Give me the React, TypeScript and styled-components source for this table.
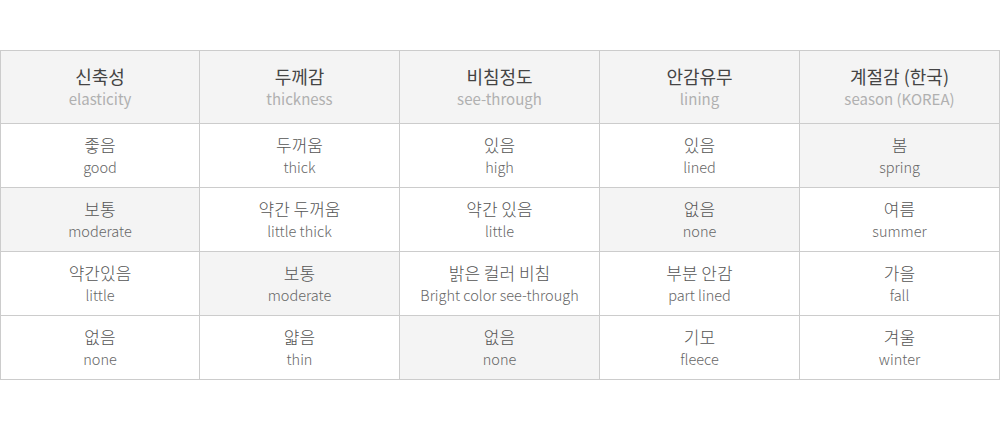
import React from "react";
import styled, { createGlobalStyle } from "styled-components";

const Global = createGlobalStyle`
  html, body { margin: 0; padding: 0; background: #fff; }
  body { font-family: "Noto Sans CJK KR", "Noto Sans", sans-serif; }
`;

const Page = styled.div`
  width: 1000px;
  padding-top: 50px;
`;

const Table = styled.table`
  width: 1000px;
  border-collapse: collapse;
  table-layout: fixed;
`;

const Col = styled.col<{ $w: number }>`
  width: ${(p) => p.$w}px;
`;

const HeadCell = styled.th`
  height: 72px;
  padding: 0;
  border: 1px solid #cccccc;
  background: #f4f4f4;
  text-align: center;
  vertical-align: middle;
  font-weight: normal;
`;

const Cell = styled.td<{ $on?: boolean }>`
  height: 63px;
  padding: 0;
  border: 1px solid #cccccc;
  background: ${(p) => (p.$on ? "#f4f4f4" : "#ffffff")};
  text-align: center;
  vertical-align: middle;
`;

const HeadKo = styled.div`
  font-size: 18px;
  line-height: 24px;
  color: #444444;
`;

const HeadEn = styled.div`
  font-size: 15px;
  line-height: 22px;
  color: #b0b0b0;
`;

const Ko = styled.div`
  font-size: 17px;
  line-height: 23px;
  color: #555555;
  font-weight: 300;
`;

const En = styled.div`
  font-size: 14.5px;
  line-height: 22px;
  color: #666666;
  font-weight: 300;
`;

const heads: [string, string][] = [
  ["신축성", "elasticity"],
  ["두께감", "thickness"],
  ["비침정도", "see-through"],
  ["안감유무", "lining"],
  ["계절감 (한국)", "season (KOREA)"],
];

type C = [string, string, boolean?];
const rows: C[][] = [
  [["좋음", "good"], ["두꺼움", "thick"], ["있음", "high"], ["있음", "lined"], ["봄", "spring", true]],
  [["보통", "moderate", true], ["약간 두꺼움", "little thick"], ["약간 있음", "little"], ["없음", "none", true], ["여름", "summer"]],
  [["약간있음", "little"], ["보통", "moderate", true], ["밝은 컬러 비침", "Bright color see-through"], ["부분 안감", "part lined"], ["가을", "fall"]],
  [["없음", "none"], ["얇음", "thin"], ["없음", "none", true], ["기모", "fleece"], ["겨울", "winter"]],
];

const widths = [199, 200, 200, 200, 200];

export default function App() {
  return (
    <Page>
      <Global />
      <Table>
        <colgroup>
          {widths.map((w, i) => (
            <Col key={i} $w={w} />
          ))}
        </colgroup>
        <thead>
          <tr>
            {heads.map(([k, e]) => (
              <HeadCell key={k}>
                <HeadKo>{k}</HeadKo>
                <HeadEn>{e}</HeadEn>
              </HeadCell>
            ))}
          </tr>
        </thead>
        <tbody>
          {rows.map((r, i) => (
            <tr key={i}>
              {r.map(([k, e, on], j) => (
                <Cell key={j} $on={!!on}>
                  <Ko>{k}</Ko>
                  <En>{e}</En>
                </Cell>
              ))}
            </tr>
          ))}
        </tbody>
      </Table>
    </Page>
  );
}
